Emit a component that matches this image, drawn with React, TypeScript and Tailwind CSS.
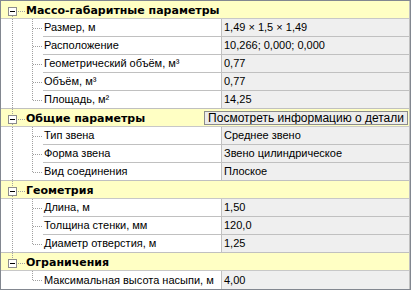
import React from "react";

type Item = { name: string; value: string };
type Group = { title: string; items: Item[]; button?: string };

const groups: Group[] = [
  {
    title: "Массо-габаритные параметры",
    items: [
      { name: "Размер, м", value: "1,49 × 1,5 × 1,49" },
      { name: "Расположение", value: "10,266; 0,000; 0,000" },
      { name: "Геометрический объём, м³", value: "0,77" },
      { name: "Объём, м³", value: "0,77" },
      { name: "Площадь, м²", value: "14,25" },
    ],
  },
  {
    title: "Общие параметры",
    button: "Посмотреть информацию о детали",
    items: [
      { name: "Тип звена", value: "Среднее звено" },
      { name: "Форма звена", value: "Звено цилиндрическое" },
      { name: "Вид соединения", value: "Плоское" },
    ],
  },
  {
    title: "Геометрия",
    items: [
      { name: "Длина, м", value: "1,50" },
      { name: "Толщина стенки, мм", value: "120,0" },
      { name: "Диаметр отверстия, м", value: "1,25" },
    ],
  },
  {
    title: "Ограничения",
    items: [{ name: "Максимальная высота насыпи, м", value: "4,00" }],
  },
];

const DOT = "#a0a0a0";

const HeaderTree = ({ first, last }: { first: boolean; last: boolean }) => (
  <svg width="25" height="17" className="shrink-0" shapeRendering="crispEdges">
    {!first && <line x1="11.5" y1="0" x2="11.5" y2="6" stroke={DOT} strokeDasharray="1 1" />}
    {!last && <line x1="11.5" y1="15" x2="11.5" y2="17" stroke={DOT} strokeDasharray="1 1" />}
    <rect x="7.5" y="6.5" width="8" height="8" fill="#fff" stroke="#8c8c8c" />
    <line x1="9" y1="10.5" x2="14" y2="10.5" stroke="#000" />
    <line x1="17" y1="10.5" x2="25" y2="10.5" stroke={DOT} strokeDasharray="1 1" />
  </svg>
);

const ChildTree = ({ lastGroup, lastChild }: { lastGroup: boolean; lastChild: boolean }) => (
  <svg width="42" height="17" className="shrink-0" shapeRendering="crispEdges">
    {!lastGroup && <line x1="11.5" y1="0" x2="11.5" y2="17" stroke={DOT} strokeDasharray="1 1" />}
    <line x1="31.5" y1="0" x2="31.5" y2={lastChild ? 10 : 17} stroke={DOT} strokeDasharray="1 1" />
    <line x1="32" y1="9.5" x2="42" y2="9.5" stroke={DOT} strokeDasharray="1 1" />
  </svg>
);

export default function App() {
  return (
    <div
      className="w-[411px] h-[290px] border border-[#828790] bg-white overflow-hidden text-[11px] text-black"
      style={{ fontFamily: '"Liberation Sans", Arial, sans-serif' }}
    >
      <div className="flex flex-col border-r border-[#c0c0c0] h-full">
        {groups.map((g, gi) => {
          const lastGroup = gi === groups.length - 1;
          return (
            <div key={g.title} className="flex flex-col">
              <div className="h-[18px] flex items-center bg-[#ffffc4] border-b border-[#c8c8c8]">
                <HeaderTree first={gi === 0} last={lastGroup} />
                <div
                  className="w-[196px] font-bold text-[11px] leading-none pt-[1px] whitespace-nowrap"
                  style={{ fontFamily: '"DejaVu Sans", Verdana, sans-serif' }}
                >
                  {g.title}
                </div>
                {g.button && (
                  <div className="flex-1 h-full pt-[2px] pb-[1px] pl-[1px] pr-[1px]">
                    <div className="h-full flex items-center px-[3px] bg-[#ececec] border border-[#8c8c8c] text-[12px] leading-none whitespace-nowrap overflow-hidden">
                      {g.button}
                    </div>
                  </div>
                )}
              </div>
              {g.items.map((it, ii) => {
                const lastChild = ii === g.items.length - 1;
                const fullLine = lastChild && !lastGroup;
                const innerLine = !lastChild;
                return (
                  <div
                    key={it.name}
                    className={"h-[18px] flex " + (fullLine ? "border-b border-[#c0c0c0]" : "")}
                  >
                    <ChildTree lastGroup={lastGroup} lastChild={lastChild} />
                    <div className={"flex-1 flex " + (innerLine ? "border-b border-[#c0c0c0]" : "")}>
                      <div className="w-[179px] flex items-center pl-[1px] border-r border-[#c0c0c0] whitespace-nowrap overflow-hidden">
                        {it.name}
                      </div>
                      <div className="flex-1 flex items-center pl-[2px] bg-[#efefef] whitespace-nowrap">
                        {it.value}
                      </div>
                    </div>
                  </div>
                );
              })}
            </div>
          );
        })}
      </div>
    </div>
  );
}
